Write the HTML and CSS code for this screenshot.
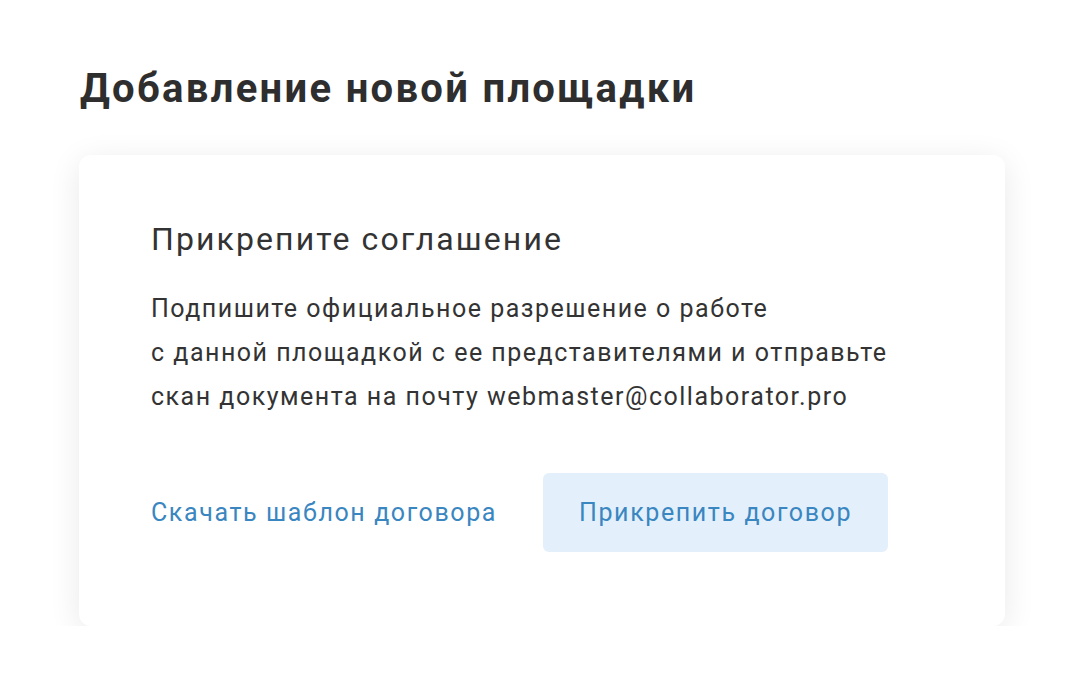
FILE: index.html
```html
<!DOCTYPE html>
<html lang="ru">
<head>
<meta charset="UTF-8">
<meta name="viewport" content="width=device-width, initial-scale=1.0">
<title>Добавление новой площадки</title>
<link rel="stylesheet" href="styles.css">
</head>
<body>
<div class="page">
  <h1 class="page-title">Добавление новой площадки</h1>
  <div class="card">
    <h2 class="card-title">Прикрепите соглашение</h2>
    <p class="card-text">Подпишите официальное разрешение о работе<br>с данной площадкой с ее представителями и отправьте<br>скан документа на почту webmaster@collaborator.pro</p>
    <div class="actions">
      <a class="link" href="#">Скачать шаблон договора</a>
      <button class="btn-attach">Прикрепить договор</button>
    </div>
  </div>
</div>
</body>
</html>
```

FILE: styles.css
```css
body {
  margin: 0;
  font-family: Roboto, sans-serif;
  color: #333;
  background: #fff;
}

.page {
  padding: 62px 0 0 79px;
  width: 926px;
}

.page-title {
  margin: 0 0 39px 1px;
  font-size: 40px;
  font-weight: 700;
  line-height: 54px;
  letter-spacing: 2.3px;
  color: #2e2e2e;
}

.card {
  background: #fff;
  border-radius: 12px;
  box-shadow: 0 6px 32px rgba(0, 0, 0, 0.09);
  padding: 64px 72px 74px;
}

.card-title {
  margin: 0 0 28px;
  font-size: 32px;
  font-weight: 400;
  line-height: 40px;
  letter-spacing: 2.1px;
}

.card-text {
  margin: 0;
  font-size: 25px;
  line-height: 44px;
  letter-spacing: 1.5px;
}

.actions {
  display: flex;
  align-items: center;
  gap: 46px;
  margin-top: 54px;
}

.link {
  color: #3a86c0;
  text-decoration: none;
  font-size: 25px;
  letter-spacing: 1.6px;
}

.btn-attach {
  font-family: Roboto, sans-serif;
  font-size: 25px;
  letter-spacing: 1.6px;
  color: #3a86c0;
  background: #e3f0fb;
  border: none;
  border-radius: 6px;
  height: 79px;
  padding: 0 36px;
  cursor: pointer;
}
```
